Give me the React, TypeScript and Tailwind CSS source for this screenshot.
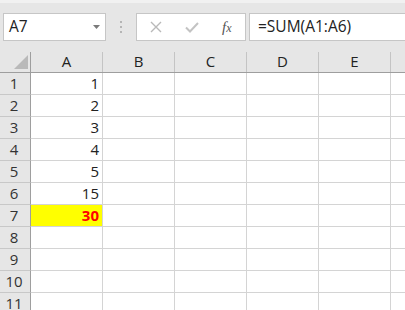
import React from "react";

const cols = ["A", "B", "C", "D", "E"];
const data: Record<number, string> = { 1: "1", 2: "2", 3: "3", 4: "4", 5: "5", 6: "15" };
const rows = [1, 2, 3, 4, 5, 6, 7, 8, 9, 10, 11];

export default function App() {
  return (
    <div
      className="w-[405px] h-[310px] overflow-hidden bg-white flex flex-col"
      style={{ fontFamily: '"Open Sans", "Noto Sans", sans-serif' }}
    >
      {/* Formula bar */}
      <div className="h-[50px] shrink-0 bg-[#e6e6e6] border-t-[3px] border-[#f1f1f1] flex items-start pt-[10px] pl-[3px]">
        <div className="w-[103px] h-[28px] bg-white border border-[#c6c6c6] flex items-center pl-[5px] pr-[5px]">
          <span className="text-[15.5px] text-[#222] flex-1 leading-none">A7</span>
          <svg width="7" height="4" viewBox="0 0 7 4">
            <path d="M0 0 L7 0 L3.5 4 Z" fill="#7a7a7a" />
          </svg>
        </div>
        <div className="w-[30px] h-[28px] flex flex-col items-center justify-center gap-[3px]">
          <div className="w-[2px] h-[2px] bg-[#b5b5b5]" />
          <div className="w-[2px] h-[2px] bg-[#b5b5b5]" />
          <div className="w-[2px] h-[2px] bg-[#b5b5b5]" />
        </div>
        <div className="w-[110px] h-[28px] bg-white border border-[#c6c6c6] flex items-center">
          <svg className="ml-[13px]" width="12" height="12" viewBox="0 0 12 12">
            <path d="M1 1 L11 11 M11 1 L1 11" stroke="#b9b9b9" strokeWidth="1.4" fill="none" />
          </svg>
          <svg className="ml-[23px]" width="14" height="11" viewBox="0 0 14 11">
            <path d="M1 5.5 L5 9.5 L13 1" stroke="#c3c3c3" strokeWidth="2" fill="none" />
          </svg>
          <span
            className="ml-[23px] text-[15px] italic text-[#555] leading-none"
            style={{ fontFamily: '"Liberation Serif", serif' }}
          >
            f<span className="text-[12px]">x</span>
          </span>
        </div>
        <div className="ml-[3px] flex-1 h-[28px] bg-white border-t border-b border-l border-[#c6c6c6] flex items-center pl-[8px]">
          <span className="text-[15.5px] text-[#222] leading-none">=SUM(A1:A6)</span>
        </div>
      </div>

      {/* Grid */}
      <div className="flex flex-col">
        {/* Column header */}
        <div className="flex h-[23px] bg-[#e6e6e6] border-b border-[#9e9e9e] shrink-0">
          <div className="w-[31px] shrink-0 flex">
            <div className="flex-1 flex items-end justify-end pb-[3px] pr-[2px]">
              <svg width="14" height="14" viewBox="0 0 14 14">
                <path d="M14 0 L14 14 L0 14 Z" fill="#b9b9b9" />
              </svg>
            </div>
            <div className="w-px h-[20px] self-end bg-[#9e9e9e]" />
          </div>
          {cols.map((c) => (
            <div key={c} className="w-[72px] shrink-0 flex">
              <div className="flex-1 flex items-center justify-center text-[15px] text-[#222]">{c}</div>
              <div className="w-px h-[20px] self-end bg-[#c4c4c4]" />
            </div>
          ))}
          <div className="flex-1" />
        </div>
        {rows.map((r) => (
          <div key={r} className="flex h-[22px] shrink-0">
            <div className="w-[31px] shrink-0 bg-[#e6e6e6] border-r border-b border-r-[#9e9e9e] border-b-[#c8c8c8] flex items-center justify-center pr-[2px] text-[15px] text-[#333] leading-none">
              {r}
            </div>
            {cols.map((c) => {
              const isA7 = c === "A" && r === 7;
              const val = c === "A" ? (r === 7 ? "30" : data[r] ?? "") : "";
              return (
                <div
                  key={c}
                  className={`w-[72px] shrink-0 border-r border-b border-[#d4d4d4] flex items-center justify-end pr-[3px] text-[15px] leading-none ${
                    isA7 ? "bg-[#ffff00] text-[#ff0000] font-bold" : "text-[#222]"
                  }`}
                >
                  {val}
                </div>
              );
            })}
            <div className="flex-1 border-b border-[#d4d4d4]" />
          </div>
        ))}
      </div>
    </div>
  );
}
